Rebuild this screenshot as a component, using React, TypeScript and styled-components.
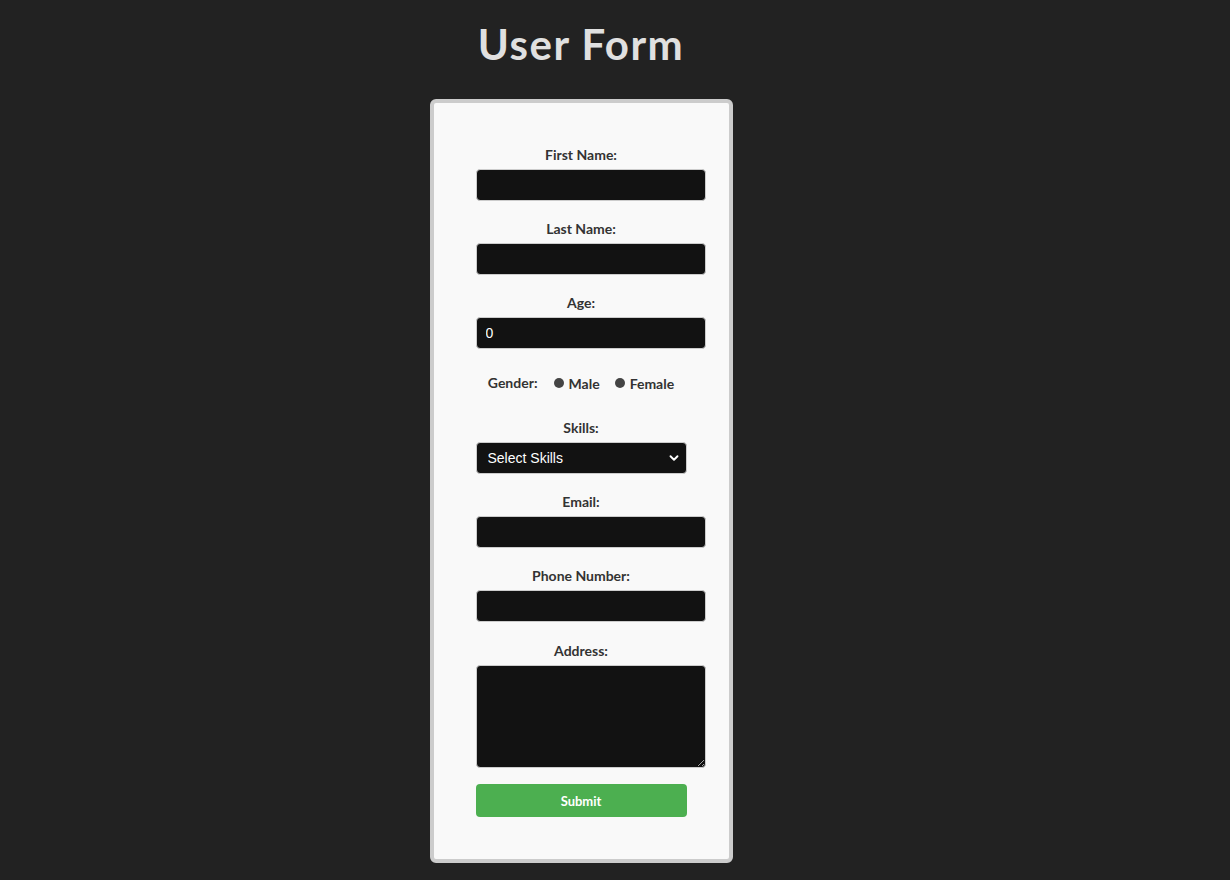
import styled, { createGlobalStyle } from "styled-components";
import { ChevronDown } from "lucide-react";

const GlobalStyle = createGlobalStyle`
  body {
    margin: 0;
    background-color: #222222;
    font-family: "Lato", "Noto Sans", sans-serif;
  }
`;

const fields = [
  { id: "firstName", label: "First Name:", type: "text" },
  { id: "lastName", label: "Last Name:", type: "text" },
  { id: "age", label: "Age:", type: "number", value: "0" },
];

const contactFields = [
  { id: "email", label: "Email:", type: "email", gap: 19 },
  { id: "phone", label: "Phone Number:", type: "tel", gap: 20 },
];

const App = () => {
  return (
    <>
      <GlobalStyle />
      <Page>
        <Title>User Form</Title>
        <Card>
          <Form onSubmit={(e) => e.preventDefault()}>
            {fields.map((f) => (
              <Group key={f.id}>
                <Label htmlFor={f.id}>{f.label}</Label>
                <Input id={f.id} type={f.type} defaultValue={f.value} />
              </Group>
            ))}

            {/* 성별 */}
            <GenderRow>
              <Label as="span">Gender:</Label>
              <RadioLabel>
                <Radio type="radio" name="gender" value="male" />
                Male
              </RadioLabel>
              <RadioLabel>
                <Radio type="radio" name="gender" value="female" />
                Female
              </RadioLabel>
            </GenderRow>

            <Group>
              <Label htmlFor="skills">Skills:</Label>
              <SelectWrap>
                <Select id="skills" defaultValue="">
                  <option value="">Select Skills</option>
                  <option value="js">JavaScript</option>
                  <option value="react">React</option>
                  <option value="node">Node.js</option>
                </Select>
                <Chevron size={14} strokeWidth={3.2} />
              </SelectWrap>
            </Group>

            {contactFields.map((f) => (
              <Group key={f.id} $gap={f.gap}>
                <Label htmlFor={f.id}>{f.label}</Label>
                <Input id={f.id} type={f.type} />
              </Group>
            ))}

            <Group>
              <Label htmlFor="address">Address:</Label>
              <TextArea id="address" />
            </Group>

            <SubmitButton type="submit">Submit</SubmitButton>
          </Form>
        </Card>
      </Page>
    </>
  );
};

export default App;

const Page = styled.div`
  width: 1162px;
  display: flex;
  flex-direction: column;
  align-items: center;
  padding-bottom: 18px;
`;

const Title = styled.h1`
  margin: 19px 0 0;
  font-size: 42px;
  line-height: 50px;
  font-weight: 700;
  letter-spacing: 1.5px;
  color: #e0e0e0;
`;

const Card = styled.div`
  margin-top: 30px;
  background-color: #f9f9f9;
  border: 4px solid #cccccc;
  border-radius: 6px;
`;

const Form = styled.form`
  width: 211px;
  padding: 43px 42px 42px;
  display: flex;
  flex-direction: column;
`;

const Group = styled.div<{ $gap?: number }>`
  display: flex;
  flex-direction: column;
  margin-bottom: ${(p) => p.$gap ?? 19}px;
`;

const Label = styled.label`
  display: block;
  text-align: center;
  font-size: 14px;
  line-height: 18px;
  font-weight: 700;
  color: #333333;
  margin-bottom: 5px;
`;

const Input = styled.input`
  width: 230px;
  height: 32px;
  box-sizing: border-box;
  padding: 0 9px;
  background-color: #121212;
  color: #ffffff;
  border: 1px solid #cccccc;
  border-radius: 4px;
  font-family: "Liberation Sans", Arial, sans-serif;
  font-size: 14px;
  outline: none;
  -moz-appearance: textfield;

  &::-webkit-outer-spin-button,
  &::-webkit-inner-spin-button {
    -webkit-appearance: none;
    margin: 0;
  }
`;

const GenderRow = styled.div`
  display: flex;
  justify-content: center;
  align-items: center;
  margin: 6px 0 27px;
  height: 18px;

  ${Label} {
    margin: 0 17px 0 0;
  }
`;

const RadioLabel = styled.label`
  display: flex;
  align-items: center;
  font-size: 14px;
  font-weight: 700;
  color: #333333;
  margin-right: 16px;

  &:last-child {
    margin-right: 0;
  }
`;

const Radio = styled.input`
  appearance: none;
  width: 10px;
  height: 10px;
  margin: 0 5px 0 -1px;
  border-radius: 50%;
  background-color: #444444;
  border: 0;
`;

const SelectWrap = styled.div`
  position: relative;
  width: 211px;
`;

const Select = styled.select`
  appearance: none;
  width: 211px;
  height: 32px;
  padding: 0 11px;
  background-color: #121212;
  color: #ffffff;
  border: 1px solid #cccccc;
  border-radius: 4px;
  font-family: "Liberation Sans", Arial, sans-serif;
  font-size: 14px;
  outline: none;
`;

const Chevron = styled(ChevronDown)`
  position: absolute;
  right: 6px;
  top: 9px;
  color: #ffffff;
  pointer-events: none;
`;

const TextArea = styled.textarea`
  width: 230px;
  height: 103px;
  box-sizing: border-box;
  padding: 8px;
  background-color: #121212;
  color: #ffffff;
  border: 1px solid #cccccc;
  border-radius: 4px;
  font-family: "Liberation Sans", Arial, sans-serif;
  font-size: 14px;
  outline: none;
`;

const SubmitButton = styled.button`
  margin-top: -3px;
  width: 211px;
  height: 33px;
  background-color: #4caf50;
  color: #ffffff;
  border: 0;
  border-radius: 4px;
  font-family: "Lato", "Noto Sans", sans-serif;
  font-size: 13px;
  font-weight: 700;
  cursor: pointer;
`;
